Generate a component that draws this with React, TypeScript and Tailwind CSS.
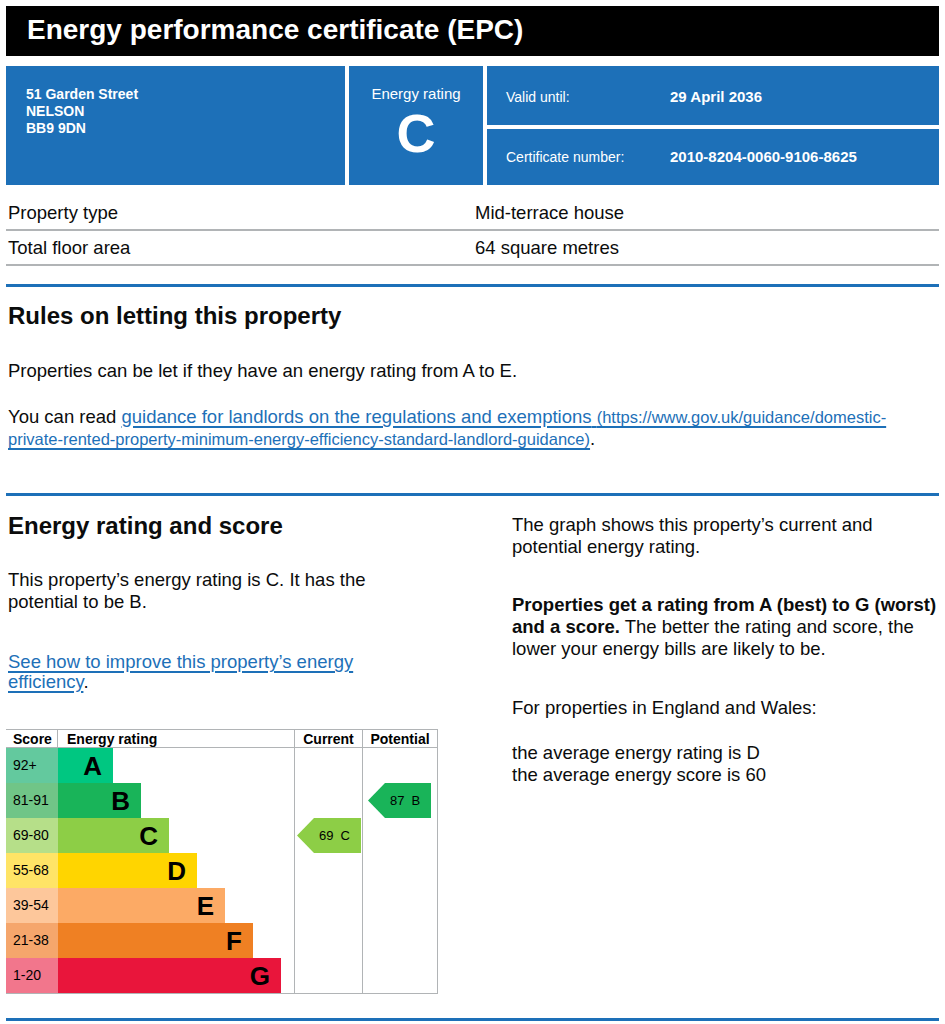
const bands = [
  { score: '92+', letter: 'A', width: 'w-[55px]', bar: 'bg-[#00c781]', light: 'bg-[#63c99e]' },
  { score: '81-91', letter: 'B', width: 'w-[83px]', bar: 'bg-[#19b459]', light: 'bg-[#70c587]' },
  { score: '69-80', letter: 'C', width: 'w-[111px]', bar: 'bg-[#8dce46]', light: 'bg-[#b6df89]' },
  { score: '55-68', letter: 'D', width: 'w-[139px]', bar: 'bg-[#ffd500]', light: 'bg-[#ffe466]' },
  { score: '39-54', letter: 'E', width: 'w-[167px]', bar: 'bg-[#fcaa65]', light: 'bg-[#fdc79b]' },
  { score: '21-38', letter: 'F', width: 'w-[195px]', bar: 'bg-[#ef8023]', light: 'bg-[#f5a66c]' },
  { score: '1-20', letter: 'G', width: 'w-[223px]', bar: 'bg-[#e9153b]', light: 'bg-[#f2768c]' },
];

function Pointer({ score, letter, color }: { score: number; letter: string; color: string }) {
  return (
    <div
      className={`flex h-[35px] items-center gap-[7px] pl-[22px] text-[13px] leading-none text-black [clip-path:polygon(0_50%,17px_0,100%_0,100%_100%,17px_100%)] ${color}`}
    >
      <span>{score}</span>
      <span>{letter}</span>
    </div>
  );
}

function RatingChart() {
  return (
    <div className="flex w-[432px] border-t border-b border-[#b1b4b6] text-black">
      {/* Score + bands */}
      <div className="w-[289px] border-r border-[#b1b4b6]">
        <div className="flex h-[18px] border-b border-[#b1b4b6] text-[14px] font-bold leading-none">
          <div className="flex w-[52px] items-center border-r border-[#b1b4b6] pl-[7px]">Score</div>
          <div className="flex items-center pl-[9px]">Energy rating</div>
        </div>
        {bands.map((band) => (
          <div key={band.letter} className="flex h-[35px]">
            <div className={`flex w-[52px] items-center pl-[7px] text-[14px] ${band.light}`}>{band.score}</div>
            <div
              className={`flex items-center justify-end pr-[11px] text-[26px] font-bold leading-none ${band.width} ${band.bar}`}
            >
              {band.letter}
            </div>
          </div>
        ))}
      </div>

      {/* Current */}
      <div className="w-[68px] border-r border-[#b1b4b6]">
        <div className="flex h-[18px] items-center justify-center border-b border-[#b1b4b6] text-[14px] font-bold leading-none">
          Current
        </div>
        <div className="h-[70px]" />
        <div className="ml-[2px] w-[64px]">
          <Pointer score={69} letter="C" color="bg-[#8dce46]" />
        </div>
      </div>

      {/* Potential */}
      <div className="w-[75px] border-r border-[#b1b4b6]">
        <div className="flex h-[18px] items-center justify-center border-b border-[#b1b4b6] text-[14px] font-bold leading-none">
          Potential
        </div>
        <div className="h-[35px]" />
        <div className="ml-[5px] w-[63px]">
          <Pointer score={87} letter="B" color="bg-[#19b459]" />
        </div>
      </div>
    </div>
  );
}

export default function App() {
  return (
    <div className="min-h-screen bg-white px-[6px] pt-[6px] pb-[10px] font-['Liberation_Sans',Arial,sans-serif] text-[#0b0c0c]">
      {/* Title bar */}
      <div className="flex h-[50px] items-center bg-black pb-[3px] pl-[21px]">
        <h1 className="text-[28px] font-bold leading-none text-white">Energy performance certificate (EPC)</h1>
      </div>

      {/* Summary panel */}
      <div className="mt-[10px] flex h-[119px] gap-[4px] text-white">
        <div className="w-[339px] bg-[#1d70b8] pl-[20px] pt-[20px] text-[14px] font-bold leading-[17px]">
          <p>51 Garden Street</p>
          <p>NELSON</p>
          <p>BB9 9DN</p>
        </div>
        <div className="flex w-[134px] flex-col items-center bg-[#1d70b8] pt-[19px]">
          <p className="text-[15px] leading-[18px]">Energy rating</p>
          <p className="mt-[3px] text-[54px] font-bold leading-none">C</p>
        </div>
        <div className="flex flex-1 flex-col gap-[4px]">
          <div className="flex h-[59px] items-center bg-[#1d70b8] pl-[19px] pt-[4px]">
            <span className="w-[164px] text-[14px]">Valid until:</span>
            <span className="text-[15px] font-bold">29 April 2036</span>
          </div>
          <div className="flex flex-1 items-center bg-[#1d70b8] pl-[19px]">
            <span className="w-[164px] text-[14px]">Certificate number:</span>
            <span className="text-[15px] font-bold">2010-8204-0060-9106-8625</span>
          </div>
        </div>
      </div>

      {/* Property details */}
      <div className="mt-[11px] text-[18.5px] leading-[22px]">
        <div className="flex border-b-2 border-[#b1b4b6] px-[2px] pt-[6px] pb-[5px]">
          <span className="w-[467px]">Property type</span>
          <span>Mid-terrace house</span>
        </div>
        <div className="flex border-b-2 border-[#b1b4b6] px-[2px] pt-[6px] pb-[5px]">
          <span className="w-[467px]">Total floor area</span>
          <span>64 square metres</span>
        </div>
      </div>

      <div className="mt-[18px] h-[3px] bg-[#1d70b8]" />

      {/* Rules on letting */}
      <section className="px-[2px]">
        <h2 className="mt-[14px] text-[24px] font-bold leading-[30px]">Rules on letting this property</h2>
        <p className="mt-[29px] text-[18.5px] leading-[22px]">
          Properties can be let if they have an energy rating from A to E.
        </p>
        <p className="mt-[24px] text-[18.5px] leading-[21px]">
          You can read{' '}
          <a href="#" className="text-[#1d70b8] underline decoration-[1.5px] underline-offset-[3px]">
            guidance for landlords on the regulations and exemptions{' '}
            <span className="text-[16.5px]">
              (https://www.gov.uk/guidance/domestic-private-rented-property-minimum-energy-efficiency-standard-landlord-guidance)
            </span>
          </a>
          .
        </p>
      </section>

      <div className="mt-[43px] h-[3px] bg-[#1d70b8]" />

      {/* Energy rating and score */}
      <section className="flex">
        <div className="w-[432px]">
          <h2 className="mt-[15px] px-[2px] text-[24px] font-bold leading-[30px]">Energy rating and score</h2>
          <p className="mt-[28px] max-w-[400px] px-[2px] text-[18.5px] leading-[22px]">
            This property’s energy rating is C. It has the potential to be B.
          </p>
          <p className="mt-[39px] max-w-[400px] px-[2px] text-[18.5px] leading-[20px]">
            <a href="#" className="text-[#1d70b8] underline decoration-[1.5px] underline-offset-[3px]">
              See how to improve this property’s energy efficiency
            </a>
            .
          </p>
          <div className="mt-[37px]">
            <RatingChart />
          </div>
        </div>

        <div className="ml-[74px] w-[430px] pt-[18px] text-[18.5px] leading-[22px]">
          <p>The graph shows this property’s current and potential energy rating.</p>
          <p className="mt-[36px]">
            <strong className="font-bold">Properties get a rating from A (best) to G (worst) and a score.</strong> The
            better the rating and score, the lower your energy bills are likely to be.
          </p>
          <p className="mt-[37px]">For properties in England and Wales:</p>
          <p className="mt-[23px]">
            the average energy rating is D
            <br />
            the average energy score is 60
          </p>
        </div>
      </section>

      <div className="mt-[24px] h-[3px] bg-[#1d70b8]" />
    </div>
  );
}
